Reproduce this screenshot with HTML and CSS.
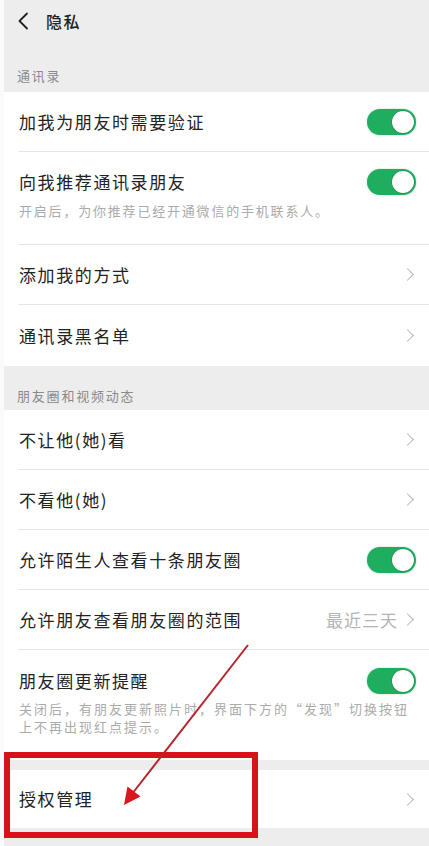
FILE: index.html
```html
<!DOCTYPE html>
<html lang="zh-CN">
<head>
<meta charset="utf-8">
<title>隐私</title>
<link rel="stylesheet" href="styles.css">
</head>
<body>
<div class="page">
  <header class="topbar">
    <svg class="back" width="12" height="18" viewBox="0 0 12 18"><polyline points="10,1.5 2.5,9 10,16.5" fill="none" stroke="#1f1f1f" stroke-width="1.8" stroke-linecap="round" stroke-linejoin="round"/></svg>
    <span class="title">隐私</span>
  </header>

  <div class="section-label first">通讯录</div>
  <div class="group">
    <div class="cell"><div class="cell-inner"><span class="cell-title">加我为朋友时需要验证</span><span class="switch"></span></div></div>
    <div class="cell tall"><div class="cell-inner col">
      <div class="cell-row"><span class="cell-title">向我推荐通讯录朋友</span><span class="switch"></span></div>
      <div class="cell-desc">开启后，为你推荐已经开通微信的手机联系人。</div>
    </div></div>
    <div class="cell"><div class="cell-inner"><span class="cell-title">添加我的方式</span><span class="chev"></span></div></div>
    <div class="cell last"><div class="cell-inner"><span class="cell-title">通讯录黑名单</span><span class="chev"></span></div></div>
  </div>

  <div class="section-label">朋友圈和视频动态</div>
  <div class="group">
    <div class="cell"><div class="cell-inner"><span class="cell-title">不让他(她)看</span><span class="chev"></span></div></div>
    <div class="cell"><div class="cell-inner"><span class="cell-title">不看他(她)</span><span class="chev"></span></div></div>
    <div class="cell"><div class="cell-inner"><span class="cell-title">允许陌生人查看十条朋友圈</span><span class="switch"></span></div></div>
    <div class="cell"><div class="cell-inner"><span class="cell-title">允许朋友查看朋友圈的范围</span><span class="right"><span class="value">最近三天</span><span class="chev"></span></span></div></div>
    <div class="cell tall2 last"><div class="cell-inner col">
      <div class="cell-row"><span class="cell-title">朋友圈更新提醒</span><span class="switch"></span></div>
      <div class="cell-desc two">关闭后，有朋友更新照片时，界面下方的“发现”切换按钮<br>上不再出现红点提示。</div>
    </div></div>
  </div>

  <div class="spacer"></div>
  <div class="group">
    <div class="cell short last"><div class="cell-inner"><span class="cell-title">授权管理</span><span class="chev"></span></div></div>
  </div>

  <div class="highlight"></div>
  <svg class="arrow" width="429" height="846" viewBox="0 0 429 846">
    <line x1="248" y1="645" x2="132" y2="794" stroke="#b3262b" stroke-width="2"/>
    <polygon points="124,805 127.5,786.5 140.5,796.5" fill="#d8161c"/>
  </svg>
</div>
</body>
</html>
```

FILE: styles.css
```css
html, body {
  margin: 0;
  padding: 0;
  background: #ffffff;
}
body {
  font-family: "Noto Sans CJK SC", "Noto Sans", sans-serif;
  color: #222222;
}
.page {
  position: relative;
  width: 429px;
  height: 846px;
  overflow: hidden;
  background: #ededed;
  border-left: 4px solid #fafafa;
  box-sizing: border-box;
}
.topbar {
  height: 44px;
  display: flex;
  align-items: center;
  padding-left: 13px;
  box-sizing: border-box;
  padding-bottom: 2px;
}
.back {
  display: block;
}
.title {
  margin-left: 17px;
  font-size: 16px;
  font-weight: 500;
  letter-spacing: 1.5px;
  line-height: 20px;
}
.section-label {
  height: 44px;
  display: flex;
  align-items: flex-end;
  padding-left: 13px;
  padding-bottom: 6px;
  box-sizing: border-box;
  font-size: 13px;
  letter-spacing: 1.8px;
  color: #8a8a8a;
  line-height: 16px;
}
.section-label.first {
  height: 48px;
  padding-bottom: 8px;
}
.group {
  background: #ffffff;
  margin-left: -4px;
}
.cell {
  height: 60px;
  padding-left: 18px;
}
.cell.last {
  height: 61px;
}
.cell.tall {
  height: 93px;
}
.cell.tall2 {
  height: 110px;
}
.cell.short {
  height: 58px;
}
.cell-inner {
  height: 100%;
  box-sizing: border-box;
  border-bottom: 1px solid #e6e6e6;
  display: flex;
  align-items: center;
  justify-content: space-between;
  padding-right: 13px;
  padding-left: 1px;
}
.cell.last .cell-inner {
  border-bottom: none;
}
.cell-inner.col {
  flex-direction: column;
  align-items: stretch;
  justify-content: flex-start;
  padding-top: 17px;
}
.tall2 .cell-inner.col {
  padding-top: 18px;
}
.cell-row {
  display: flex;
  align-items: center;
  justify-content: space-between;
  height: 26px;
}
.cell-title {
  font-size: 17px;
  letter-spacing: 1.6px;
  line-height: 22px;
}
.cell-desc {
  margin-top: 8px;
  font-size: 13px;
  letter-spacing: 1.8px;
  line-height: 16px;
  color: #ababab;
  padding-right: 2px;
}
.cell-desc.two {
  margin-top: 6px;
  line-height: 18px;
  letter-spacing: 2px;
}
.switch {
  position: relative;
  width: 49px;
  height: 26px;
  border-radius: 13px;
  background: #1fae5f;
  box-shadow: 0 0 2px rgba(31, 174, 95, 0.45);
  flex: none;
}
.switch::after {
  content: "";
  position: absolute;
  right: 2px;
  top: 2px;
  width: 22px;
  height: 22px;
  border-radius: 50%;
  background: #ffffff;
  box-shadow: 0 0 0 0.6px #178a4c;
}
.chev {
  display: block;
  width: 8px;
  height: 8px;
  border-top: 1.4px solid #b5b5b5;
  border-right: 1.4px solid #b5b5b5;
  transform: rotate(45deg);
  margin-right: 4px;
  flex: none;
}
.right {
  display: flex;
  align-items: center;
}
.value {
  font-size: 17px;
  letter-spacing: 1px;
  color: #b5b5b5;
  line-height: 22px;
  margin-right: 5px;
}
.spacer {
  height: 10px;
}
.highlight {
  position: absolute;
  left: 0;
  top: 752px;
  width: 254px;
  height: 86px;
  box-sizing: border-box;
  border: 6px solid #d8121a;
}
.arrow {
  position: absolute;
  left: -4px;
  top: 0;
  pointer-events: none;
}
```
